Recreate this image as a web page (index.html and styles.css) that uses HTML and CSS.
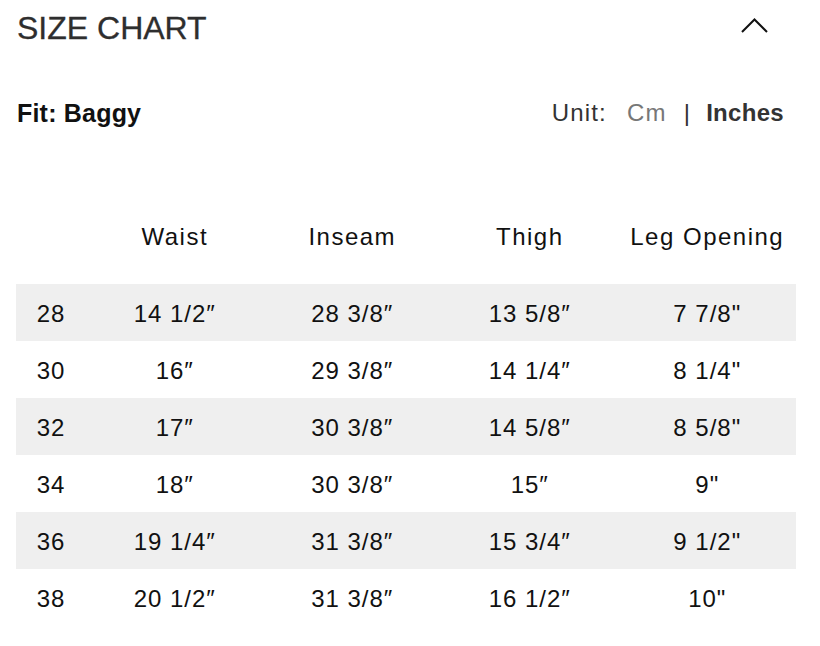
FILE: index.html
```html
<!DOCTYPE html>
<html lang="en">
<head>
<meta charset="utf-8">
<title>Size Chart</title>
<link rel="stylesheet" href="styles.css">
</head>
<body>
<section class="chart">
  <header class="chart-head">
    <h2 class="chart-title">SIZE CHART</h2>
    <button class="toggle" aria-label="Collapse">
      <svg width="27" height="15" viewBox="0 0 27 15"><path d="M1 14 L13.5 1.5 L26 14" fill="none" stroke="#111" stroke-width="2"/></svg>
    </button>
  </header>
  <div class="meta">
    <div class="fit">Fit: Baggy</div>
    <div class="unit">
      <span class="unit-label">Unit:</span>
      <span class="unit-opt off">Cm</span>
      <span class="unit-sep">|</span>
      <span class="unit-opt on">Inches</span>
    </div>
  </div>
  <div class="table">
    <div class="row head"><div></div><div>Waist</div><div>Inseam</div><div>Thigh</div><div>Leg Opening</div></div>
    <div class="row shade"><div>28</div><div>14 1/2″</div><div>28 3/8″</div><div>13 5/8″</div><div>7 7/8"</div></div>
    <div class="row"><div>30</div><div>16″</div><div>29 3/8″</div><div>14 1/4″</div><div>8 1/4"</div></div>
    <div class="row shade"><div>32</div><div>17″</div><div>30 3/8″</div><div>14 5/8″</div><div>8 5/8"</div></div>
    <div class="row"><div>34</div><div>18″</div><div>30 3/8″</div><div>15″</div><div>9"</div></div>
    <div class="row shade"><div>36</div><div>19 1/4″</div><div>31 3/8″</div><div>15 3/4″</div><div>9 1/2"</div></div>
    <div class="row"><div>38</div><div>20 1/2″</div><div>31 3/8″</div><div>16 1/2″</div><div>10"</div></div>
  </div>
</section>
</body>
</html>
```
FILE: styles.css
```css
* { box-sizing: border-box; }
html, body { margin: 0; padding: 0; background: #fff; }
body { font-family: "Liberation Sans", Arial, sans-serif; color: #111; }
.chart { width: 820px; padding: 0 24px 0 16px; }
.chart-head { display: flex; align-items: center; justify-content: space-between; height: 56px; }
.chart-title { margin: 0 0 0 1px; font-size: 32px; font-weight: 400; color: #2e2e2e; line-height: 1; -webkit-text-stroke: 0.3px #2e2e2e; }
.toggle { border: 0; background: none; padding: 0; margin: 0 28px 6px 0; display: flex; cursor: pointer; }
.meta { display: flex; align-items: center; justify-content: space-between; height: 40px; margin-top: 37px; }
.fit { font-size: 25px; font-weight: 700; margin-left: 1px; letter-spacing: 0.2px; }
.unit { display: flex; align-items: center; font-size: 24px; letter-spacing: 1.2px; color: #333; margin-right: 12px; }
.unit-label { margin-right: 20px; }
.unit-opt.off { color: #777; }
.unit-sep { margin: 0 15px 0 17px; color: #333; }
.unit-opt.on { font-weight: 700; color: #333; letter-spacing: 0.3px; }
.table { margin-top: 76px; }
.row { display: grid; grid-template-columns: 70px repeat(4, 1fr); height: 57px; align-items: center; padding-top: 3px; font-size: 24px; letter-spacing: 1px; color: #111; }
.row > div { text-align: center; }
.row.head { height: 56px; padding-top: 0; margin-bottom: 19px; font-size: 24px; letter-spacing: 1.5px; }
.row.shade { background: #efefef; }
```
